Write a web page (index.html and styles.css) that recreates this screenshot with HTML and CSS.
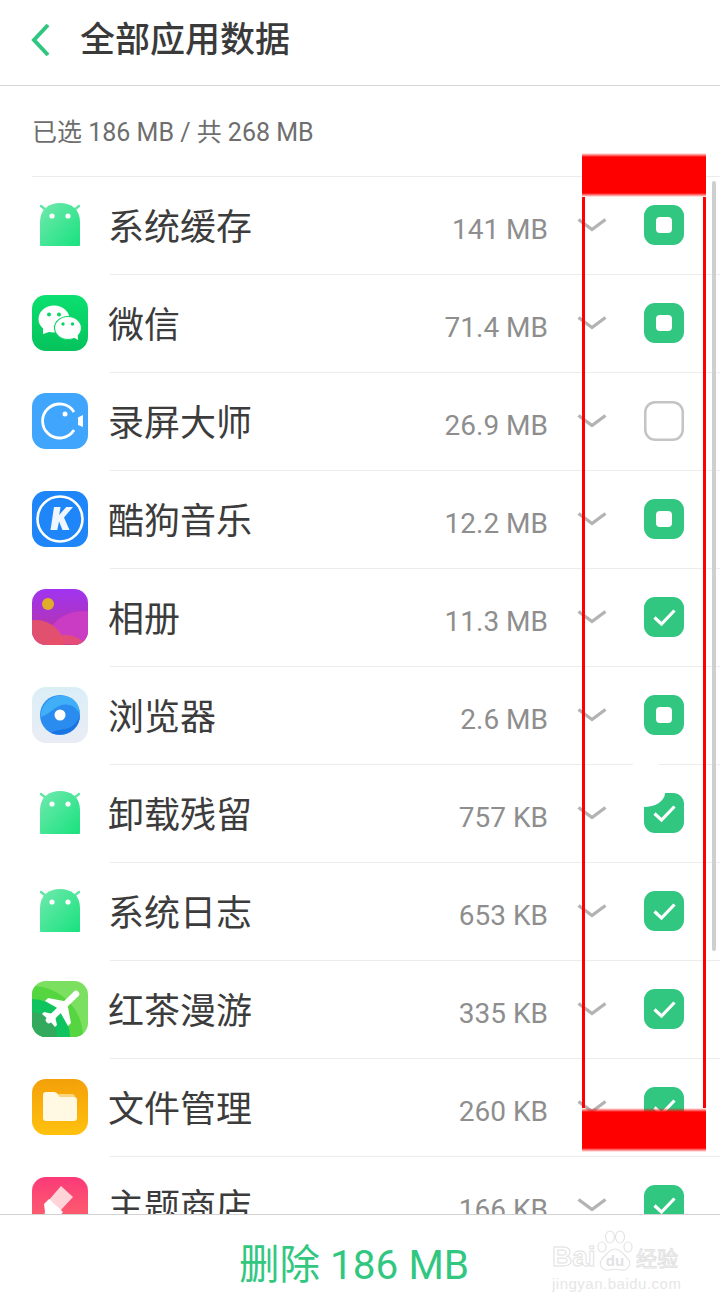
FILE: index.html
```html
<!DOCTYPE html>
<html lang="zh-CN">
<head>
	<meta charset="UTF-8">
	<meta name="viewport" content="width=device-width, initial-scale=1">
	<title>全部应用数据</title>
	<link rel="stylesheet" href="styles.css">
</head>
<body>
	<svg class="defs" width="0" height="0">
		<defs>
			<linearGradient id="g-android" x1="0" y1="0" x2="1" y2="1"><stop offset="0" stop-color="#72e9ae"/><stop offset="1" stop-color="#18e27e"/></linearGradient>
			<linearGradient id="g-wechat" x1="0" y1="0" x2="0" y2="1"><stop offset="0" stop-color="#0be06f"/><stop offset="1" stop-color="#06c25c"/></linearGradient>
			<linearGradient id="g-photo" x1="0" y1="0" x2="0" y2="1"><stop offset="0" stop-color="#a033f0"/><stop offset="1" stop-color="#b9359c"/></linearGradient>
			<linearGradient id="g-browser" x1="0" y1="0" x2="0" y2="1"><stop offset="0" stop-color="#daeef6"/><stop offset="1" stop-color="#eaecf5"/></linearGradient>
			<linearGradient id="g-files" x1="0" y1="0" x2="0" y2="1"><stop offset="0" stop-color="#f4a009"/><stop offset="1" stop-color="#ffc10e"/></linearGradient>
			<linearGradient id="g-theme" x1="0" y1="0" x2="0" y2="1"><stop offset="0" stop-color="#fb3a78"/><stop offset="1" stop-color="#fd6a6a"/></linearGradient>
			<clipPath id="c-tile"><rect width="56" height="56" rx="14"/></clipPath>
			<symbol id="i-android" viewBox="0 0 56 56">
				<path d="M9 9l5 4M47 9l-5 4" stroke="#5fe6a3" stroke-width="2.400" stroke-linecap="round"/>
				<path d="M8 25C8 12 17 6 28 6s20 6 20 19v23a1 1 0 0 1-1 1H9a1 1 0 0 1-1-1z" fill="url(#g-android)"/>
				<circle cx="20" cy="19" r="2.600" fill="#fff"/><circle cx="36" cy="19" r="2.600" fill="#fff"/>
			</symbol>
			<symbol id="i-chevron" viewBox="0 0 30 20">
				<path d="M1.500 3.500L15 13.500L28.500 3.500" fill="none" stroke="#b3b3b3" stroke-width="3.400"/>
			</symbol>
			<symbol id="i-dash" viewBox="0 0 40 40">
				<rect width="40" height="40" rx="11" fill="#32c781"/>
				<rect x="12" y="12" width="16" height="16" rx="4" fill="#fff"/>
			</symbol>
			<symbol id="i-tick" viewBox="0 0 40 40">
				<rect width="40" height="40" rx="11" fill="#32c781"/>
				<path d="M10.500 20.500l7 6.500L30.500 13.500" fill="none" stroke="#fff" stroke-width="3.200"/>
			</symbol>
			<symbol id="i-empty" viewBox="0 0 40 40">
				<rect x="1.250" y="1.250" width="37.500" height="37.500" rx="10" fill="#fff" stroke="#c4c4c4" stroke-width="2.500"/>
			</symbol>
		</defs>
	</svg>

	<div class="page">
		<header class="header">
			<svg class="back" viewBox="0 0 20 34" width="20" height="34"><path d="M17 2L3 17l14 15" fill="none" stroke="#2fc680" stroke-width="4"/></svg>
			<h1 class="title">全部应用数据</h1>
		</header>

		<div class="summary">已选 186 MB / 共 268 MB</div>

		<main class="list">
			<div class="row">
				<svg class="app-icon"><use href="#i-android"/></svg>
				<div class="row-body">
					<span class="name">系统缓存</span><span class="size">141 MB</span>
					<svg class="chevron"><use href="#i-chevron"/></svg>
					<svg class="check"><use href="#i-dash"/></svg>
				</div>
			</div>
			<div class="row">
				<svg class="app-icon" viewBox="0 0 56 56">
					<rect width="56" height="56" rx="14" fill="url(#g-wechat)"/>
					<ellipse cx="22" cy="24" rx="15.500" ry="13.500" fill="#fff"/>
					<path d="M11 33l0 6 9-3z" fill="#fff"/>
					<circle cx="17" cy="19.500" r="2" fill="#0bd567"/><circle cx="27" cy="19.500" r="2" fill="#0bd567"/>
					<ellipse cx="36" cy="33" rx="13.500" ry="11.500" fill="#fff" stroke="#0bd567" stroke-width="1.200"/>
					<path d="M41 42l5 3-.5-7z" fill="#fff"/>
					<circle cx="31" cy="29" r="1.700" fill="#0bd567"/><circle cx="40.500" cy="29" r="1.700" fill="#0bd567"/>
				</svg>
				<div class="row-body">
					<span class="name">微信</span><span class="size">71.4 MB</span>
					<svg class="chevron"><use href="#i-chevron"/></svg>
					<svg class="check"><use href="#i-dash"/></svg>
				</div>
			</div>
			<div class="row">
				<svg class="app-icon" viewBox="0 0 56 56">
					<rect width="56" height="56" rx="14" fill="#3fa5fd"/>
					<path d="M42 37A17 17 0 1 1 42 19" fill="none" stroke="#fff" stroke-width="2.800"/>
					<circle cx="33" cy="21" r="2.500" fill="#fff"/>
					<path d="M46 24.500l5-2.500v12l-5-2z" fill="#fff"/>
				</svg>
				<div class="row-body">
					<span class="name">录屏大师</span><span class="size">26.9 MB</span>
					<svg class="chevron"><use href="#i-chevron"/></svg>
					<svg class="check"><use href="#i-empty"/></svg>
				</div>
			</div>
			<div class="row">
				<svg class="app-icon" viewBox="0 0 56 56">
					<rect width="56" height="56" rx="14" fill="#1e86f8"/>
					<circle cx="28" cy="28" r="22.500" fill="none" stroke="#fff" stroke-width="2.600"/>
					<path d="M22 16h6.500l-1.300 8 7-8H41l-9 10.500L37.500 39h-7l-3.500-8.500-1.700 8.500H18.500z" fill="#eef6ff"/>
				</svg>
				<div class="row-body">
					<span class="name">酷狗音乐</span><span class="size">12.2 MB</span>
					<svg class="chevron"><use href="#i-chevron"/></svg>
					<svg class="check"><use href="#i-dash"/></svg>
				</div>
			</div>
			<div class="row">
				<svg class="app-icon" viewBox="0 0 56 56">
					<g clip-path="url(#c-tile)">
						<rect width="56" height="56" fill="url(#g-photo)"/>
						<circle cx="16" cy="15" r="6" fill="#e0ad28"/>
						<circle cx="50" cy="60" r="38" fill="#cb3cc4"/>
						<circle cx="4" cy="60" r="29" fill="#e2506f"/>
						<circle cx="34" cy="70" r="24" fill="#e8506a" opacity=".85"/>
						<circle cx="35" cy="70" r="15" fill="#b53ab0" opacity=".7"/>
					</g>
				</svg>
				<div class="row-body">
					<span class="name">相册</span><span class="size">11.3 MB</span>
					<svg class="chevron"><use href="#i-chevron"/></svg>
					<svg class="check"><use href="#i-tick"/></svg>
				</div>
			</div>
			<div class="row">
				<svg class="app-icon" viewBox="0 0 56 56">
					<rect width="56" height="56" rx="14" fill="url(#g-browser)"/>
					<circle cx="28" cy="28" r="20" fill="#2b8cf0"/>
					<path d="M9 30C8 15 24 3 39 11c6 3 9 10 9 17-3-9-13-13-21-9-6 3-10 8-18 11z" fill="#41aef8"/>
					<path d="M19 46c8 3 18 1 24-5 3-3 5-8 5-13-3 9-9 13-15 14-5 1-10 1-14 4z" fill="#1a74e2"/>
					<circle cx="28" cy="28" r="5.500" fill="#fff"/>
				</svg>
				<div class="row-body">
					<span class="name">浏览器</span><span class="size">2.6 MB</span>
					<svg class="chevron"><use href="#i-chevron"/></svg>
					<svg class="check"><use href="#i-dash"/></svg>
				</div>
			</div>
			<div class="row">
				<svg class="app-icon"><use href="#i-android"/></svg>
				<div class="row-body">
					<span class="name">卸载残留</span><span class="size">757 KB</span>
					<svg class="chevron"><use href="#i-chevron"/></svg>
					<svg class="check"><use href="#i-tick"/></svg>
				</div>
			</div>
			<div class="row">
				<svg class="app-icon"><use href="#i-android"/></svg>
				<div class="row-body">
					<span class="name">系统日志</span><span class="size">653 KB</span>
					<svg class="chevron"><use href="#i-chevron"/></svg>
					<svg class="check"><use href="#i-tick"/></svg>
				</div>
			</div>
			<div class="row">
				<svg class="app-icon" viewBox="0 0 56 56">
					<g clip-path="url(#c-tile)">
						<rect width="56" height="56" fill="#7bdf5f"/>
						<circle cx="0" cy="56" r="51" fill="#55d53f"/>
						<circle cx="0" cy="56" r="38" fill="#0fc45f"/>
						<circle cx="0" cy="56" r="25" fill="#32a95c"/>
					</g>
					<path d="M17 39L44 13" stroke="#fff" stroke-width="6.500" stroke-linecap="round"/>
					<path d="M13 20l3-3 21 4-8 8zM36 45l3-3-4-21-8 8zM10 33l2-2 9 2-4 6zM23 46l2-2-2-9-6 4z" fill="#fff"/>
				</svg>
				<div class="row-body">
					<span class="name">红茶漫游</span><span class="size">335 KB</span>
					<svg class="chevron"><use href="#i-chevron"/></svg>
					<svg class="check"><use href="#i-tick"/></svg>
				</div>
			</div>
			<div class="row">
				<svg class="app-icon" viewBox="0 0 56 56">
					<rect width="56" height="56" rx="14" fill="url(#g-files)"/>
					<path d="M26 15h14a3 3 0 0 1 3 3v5H26z" fill="#fcd47e"/>
					<path d="M11 16a3 3 0 0 1 3-3h8c2 0 3 1 4 2.500l1.500 2.500H42a3 3 0 0 1 3 3v18a3 3 0 0 1-3 3H14a3 3 0 0 1-3-3z" fill="#fff8e2"/>
				</svg>
				<div class="row-body">
					<span class="name">文件管理</span><span class="size">260 KB</span>
					<svg class="chevron"><use href="#i-chevron"/></svg>
					<svg class="check"><use href="#i-tick"/></svg>
				</div>
			</div>
			<div class="row">
				<svg class="app-icon" viewBox="0 0 56 56">
					<rect width="56" height="56" rx="14" fill="url(#g-theme)"/>
					<path d="M29 9l12 11-13 14-11-11z" fill="#ffd3d8"/>
					<path d="M17 22l14 13-3 4-3 13H14l-4-4 3-13-1-8z" fill="#fff"/>
				</svg>
				<div class="row-body">
					<span class="name">主题商店</span><span class="size">166 KB</span>
					<svg class="chevron"><use href="#i-chevron"/></svg>
					<svg class="check"><use href="#i-tick"/></svg>
				</div>
			</div>
		</main>

		<footer class="footer">删除 186 MB</footer>

		<!-- things lying over the screenshot -->
		<div class="scrollbar"></div>
		<div class="notch"></div>
		<div class="mark">
			<div class="mark-bar mark-top"></div>
			<div class="mark-sides"></div>
			<div class="mark-bar mark-bottom"></div>
		</div>
		<div class="watermark">
			<div class="wm-logo">
				<span class="wm-bai">Bai</span>
				<svg class="wm-paw" viewBox="0 0 40 42" width="40" height="42">
					<g fill="#fff" stroke="#e4e4e4" stroke-width="1.200">
						<ellipse cx="7" cy="17" rx="4" ry="5"/>
						<ellipse cx="15" cy="7" rx="4.500" ry="6"/>
						<ellipse cx="25" cy="7" rx="4.500" ry="6"/>
						<ellipse cx="33" cy="17" rx="4" ry="5"/>
						<path d="M20 19c6 0 9 6 13 10 4 5 0 12-7 11-4-1-8-1-12 0-7 1-11-6-7-11 4-4 7-10 13-10z"/>
					</g>
					<text class="wm-du" x="20" y="36" text-anchor="middle">du</text>
				</svg>
				<span class="wm-cn">经验</span>
			</div>
			<div class="wm-url">jingyan.baidu.com</div>
		</div>
	</div>
</body>
</html>
```

FILE: styles.css
```css
* {
	margin: 0;
	padding: 0;
	box-sizing: border-box;
}

body {
	background: #fff;
	font-family: Roboto, "Noto Sans CJK SC", sans-serif;
}

.defs {
	position: absolute;
}

.page {
	position: relative;
	display: flex;
	flex-direction: column;
	width: 720px;
	height: 1306px;
	overflow: hidden;
	background: #fff;
}

.header {
	display: flex;
	align-items: center;
	flex: none;
	height: 86px;
	padding: 0 0 6px 31px;
	border-bottom: 1px solid #d8d8d8;
}

.back {
	flex: none;
}

.title {
	margin: 2px 0 0 29px;
	font-size: 35px;
	font-weight: 500;
	line-height: 48px;
	color: #3a3a3a;
}

.summary {
	flex: none;
	height: 90px;
	padding: 30px 0 0 32px;
	font-size: 25px;
	line-height: 34px;
	color: #6e6e6e;
}

.list {
	flex: 1;
	min-height: 0;
	margin-left: 32px;
	overflow: hidden;
	border-top: 1px solid #ececec;
}

.row {
	display: flex;
	align-items: center;
	height: 98px;
}

.app-icon {
	flex: none;
	width: 56px;
	height: 56px;
	margin-bottom: 2px;
}

.row-body {
	display: flex;
	align-items: center;
	flex: 1;
	height: 98px;
	margin-left: 22px;
	border-bottom: 1px solid #ececec;
}

.name {
	flex: 1;
	margin: 5px 0 0 -2px;
	font-size: 36px;
	line-height: 48px;
	color: #3c3c3c;
}

.size {
	padding-top: 8px;
	font-size: 28px;
	line-height: 40px;
	color: #8e8e8e;
}

.chevron {
	flex: none;
	width: 30px;
	height: 20px;
	margin: 0 0 0 29px;
}

.check {
	flex: none;
	width: 40px;
	height: 40px;
	margin: 0 36px 1px 37px;
}

.footer {
	position: relative;
	flex: none;
	height: 92px;
	padding: 23px 12px 0 0;
	border-top: 1px solid #d2d2d2;
	background: #fff;
	font-size: 40.500px;
	line-height: 54px;
	text-align: center;
	color: #32c781;
}

.scrollbar {
	position: absolute;
	top: 181px;
	left: 712px;
	width: 4px;
	height: 770px;
	border-radius: 2px;
	background: #cfcfcf;
}

.notch {
	position: absolute;
	top: 763px;
	left: 633px;
	width: 32px;
	height: 44px;
	border-radius: 0 9px 21px 0 / 0 26px 14px 0;
	background: #fff;
}

.mark {
	position: absolute;
	top: 153px;
	left: 582px;
	display: flex;
	flex-direction: column;
	width: 124px;
	height: 999px;
}

.mark-bar {
	flex: none;
	height: 44px;
	background: linear-gradient(rgba(255, 0, 0, 0), #f00 4px, #f00 40px, rgba(255, 0, 0, 0));
}

.mark-sides {
	flex: 1;
	border-left: 3px solid #f00;
	border-right: 3px solid #f00;
}

.watermark {
	position: absolute;
	top: 1228px;
	left: 552px;
	width: 135px;
	color: #e6e6e6;
	font-family: "Liberation Sans", sans-serif;
}

.wm-logo {
	display: flex;
	align-items: flex-end;
	height: 44px;
	white-space: nowrap;
}

.wm-bai {
	width: 43px;
	font-size: 28px;
	font-weight: 700;
	line-height: 30px;
	color: #fff;
	-webkit-text-stroke: 1px #e2e2e2;
}

.wm-paw {
	flex: none;
}

.wm-du {
	font-size: 15px;
	font-weight: 700;
	fill: #e2e2e2;
}

.wm-cn {
	margin-left: 1px;
	font-family: "Noto Sans CJK SC", sans-serif;
	font-size: 21px;
	line-height: 30px;
	color: #fff;
	-webkit-text-stroke: 1px #e2e2e2;
}

.wm-url {
	margin-top: 3px;
	font-size: 15px;
	line-height: 18px;
	letter-spacing: .5px;
	white-space: nowrap;
}
```
